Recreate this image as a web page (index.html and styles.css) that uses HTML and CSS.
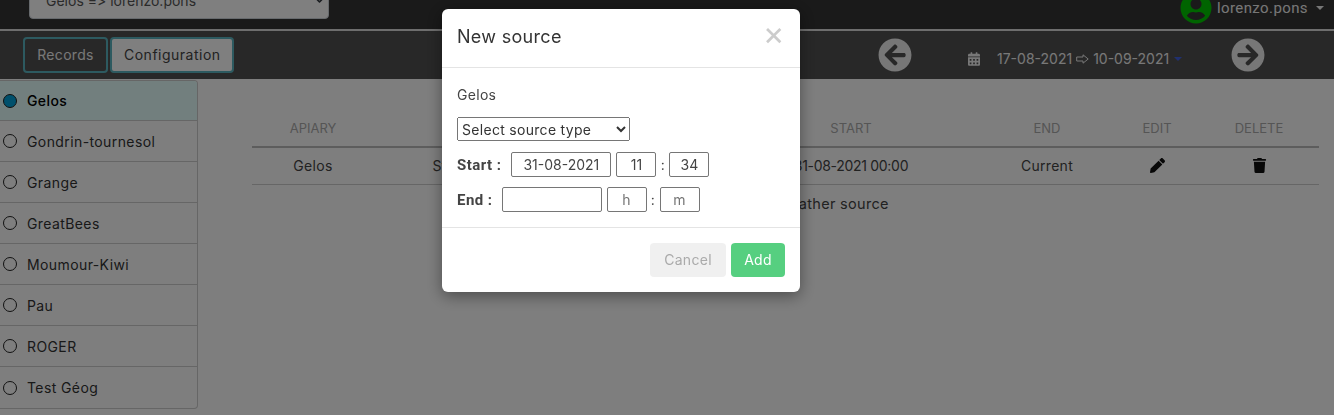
FILE: index.html
```html
<!DOCTYPE html>
<html lang="en">
<head>
    <meta charset="UTF-8">
    <meta name="viewport" content="width=device-width, initial-scale=1.0">
    <title>Weather sources</title>
    <link rel="stylesheet" href="styles.css">
</head>
<body>

<header class="topbar">
    <div class="apiary-picker">
        <select class="apiary-select">
            <option>Gelos => lorenzo.pons</option>
        </select>
        <svg class="picker-chevron" viewBox="0 0 16 16"><path d="M2 5l6 6 6-6" fill="none" stroke="#343a40" stroke-width="2" stroke-linecap="round" stroke-linejoin="round"/></svg>
    </div>
    <div class="user-menu">
        <svg class="user-icon" viewBox="0 0 496 512"><path d="M248 8C111 8 0 119 0 256s111 248 248 248 248-111 248-248S385 8 248 8zm0 96c48.6 0 88 39.4 88 88s-39.4 88-88 88-88-39.4-88-88 39.4-88 88-88zm0 344c-58.7 0-111.3-26.6-146.5-68.2 18.8-35.4 55.6-59.8 98.5-59.8 2.4 0 4.8.4 7.1 1.1 13 4.2 26.6 6.9 40.9 6.9 14.3 0 28-2.7 40.9-6.9 2.3-.7 4.7-1.1 7.1-1.1 42.9 0 79.7 24.4 98.5 59.8C359.3 421.4 306.7 448 248 448z"/></svg>
        <span class="user-name">lorenzo.pons</span>
        <span class="caret"></span>
    </div>
</header>

<nav class="subbar">
    <div class="tabs">
        <button class="tab">Records</button>
        <button class="tab tab-active">Configuration</button>
    </div>
    <div class="date-nav">
        <svg class="round-arrow" viewBox="0 0 512 512"><path d="M256 504C119 504 8 393 8 256S119 8 256 8s248 111 248 248-111 248-248 248zm28.9-143.6L209.4 288H392c13.3 0 24-10.7 24-24v-16c0-13.3-10.7-24-24-24H209.4l75.5-72.4c9.7-9.3 9.9-24.8.4-34.3l-11-10.9c-9.4-9.4-24.6-9.4-33.9 0L107.7 239c-9.4 9.4-9.4 24.6 0 33.9l132.7 132.7c9.4 9.4 24.6 9.4 33.9 0l11-10.9c9.5-9.5 9.3-25-.4-34.3z"/></svg>
        <div class="date-range">
            <svg class="calendar-icon" viewBox="0 0 448 512"><path d="M0 464c0 26.5 21.5 48 48 48h352c26.5 0 48-21.5 48-48V192H0v272zm320-196c0-6.6 5.4-12 12-12h40c6.6 0 12 5.4 12 12v40c0 6.6-5.4 12-12 12h-40c-6.6 0-12-5.4-12-12v-40zm0 128c0-6.6 5.4-12 12-12h40c6.6 0 12 5.4 12 12v40c0 6.6-5.4 12-12 12h-40c-6.6 0-12-5.4-12-12v-40zM192 268c0-6.6 5.4-12 12-12h40c6.6 0 12 5.4 12 12v40c0 6.6-5.4 12-12 12h-40c-6.6 0-12-5.4-12-12v-40zm0 128c0-6.6 5.4-12 12-12h40c6.6 0 12 5.4 12 12v40c0 6.6-5.4 12-12 12h-40c-6.6 0-12-5.4-12-12v-40zM64 268c0-6.6 5.4-12 12-12h40c6.6 0 12 5.4 12 12v40c0 6.6-5.4 12-12 12H76c-6.6 0-12-5.4-12-12v-40zm0 128c0-6.6 5.4-12 12-12h40c6.6 0 12 5.4 12 12v40c0 6.6-5.4 12-12 12H76c-6.6 0-12-5.4-12-12v-40zM400 64h-48V16c0-8.8-7.2-16-16-16h-32c-8.8 0-16 7.2-16 16v48H160V16c0-8.8-7.2-16-16-16h-32c-8.8 0-16 7.2-16 16v48H48C21.5 64 0 85.5 0 112v48h448v-48c0-26.5-21.5-48-48-48z"/></svg>
            <span>17-08-2021</span>
            <svg class="range-arrow" viewBox="0 0 13 10"><path d="M.7 3h6.3V.8L12.2 5 7 9.2V7H.7z" fill="none" stroke="#f0f0f0"/></svg>
            <span>10-09-2021</span>
            <span class="caret caret-blue"></span>
        </div>
        <svg class="round-arrow" viewBox="0 0 512 512"><path d="M256 8c137 0 248 111 248 248S393 504 256 504 8 393 8 256 119 8 256 8zm-28.9 143.6l75.5 72.4H120c-13.3 0-24 10.7-24 24v16c0 13.3 10.7 24 24 24h182.6l-75.5 72.4c-9.7 9.3-9.9 24.8-.4 34.3l11 10.9c9.4 9.4 24.6 9.4 33.9 0L404.3 273c9.4-9.4 9.4-24.6 0-33.9L271.6 106.3c-9.4-9.4-24.6-9.4-33.9 0l-11 10.9c-9.5 9.6-9.3 25.1.4 34.4z"/></svg>
    </div>
</nav>

<div class="content">
    <aside class="sidebar">
        <div class="site site-active"><span class="dot"></span>Gelos</div>
        <div class="site"><span class="dot"></span>Gondrin-tournesol</div>
        <div class="site"><span class="dot"></span>Grange</div>
        <div class="site"><span class="dot"></span>GreatBees</div>
        <div class="site"><span class="dot"></span>Moumour-Kiwi</div>
        <div class="site"><span class="dot"></span>Pau</div>
        <div class="site"><span class="dot"></span>ROGER</div>
        <div class="site"><span class="dot"></span>Test Géog</div>
    </aside>
    <main class="main">
        <table class="sources">
            <colgroup>
                <col class="col-apiary">
                <col class="col-source">
                <col class="col-start">
                <col class="col-end">
                <col class="col-edit">
                <col class="col-delete">
            </colgroup>
            <thead>
                <tr>
                    <th>APIARY</th>
                    <th>SOURCE</th>
                    <th>START</th>
                    <th>END</th>
                    <th>EDIT</th>
                    <th>DELETE</th>
                </tr>
            </thead>
            <tbody>
                <tr>
                    <td>Gelos</td>
                    <td class="cell-source">Station</td>
                    <td class="cell-date">31-08-2021 00:00</td>
                    <td>Current</td>
                    <td><svg class="row-icon" viewBox="0 0 512 512"><path d="M497.9 142.1l-46.1 46.1c-4.7 4.7-12.3 4.7-17 0l-111-111c-4.7-4.7-4.7-12.3 0-17l46.1-46.1c18.7-18.7 49.1-18.7 67.9 0l60.1 60.1c18.8 18.7 18.8 49.1 0 67.9zM284.2 99.8L21.6 362.4.4 483.9c-2.9 16.4 11.4 30.6 27.8 27.8l121.5-21.3 262.6-262.6c4.7-4.7 4.7-12.3 0-17l-111-111c-4.8-4.7-12.4-4.7-17.1 0z"/></svg></td>
                    <td><svg class="row-icon" viewBox="0 0 448 512"><path d="M432 32H312l-9.4-18.7A24 24 0 0 0 281.1 0H166.8a23.72 23.72 0 0 0-21.4 13.3L136 32H16A16 16 0 0 0 0 48v32a16 16 0 0 0 16 16h416a16 16 0 0 0 16-16V48a16 16 0 0 0-16-16zM53.2 467a48 48 0 0 0 47.9 45h245.8a48 48 0 0 0 47.9-45L416 128H32z"/></svg></td>
                </tr>
            </tbody>
        </table>
        <p class="add-source">Please add a weather source</p>
    </main>
</div>

<div class="overlay">
    <div class="modal">
        <div class="modal-header">
            <h5 class="modal-title">New source</h5>
            <span class="modal-close">×</span>
        </div>
        <div class="modal-body">
            <p class="modal-apiary">Gelos</p>
            <select class="source-type">
                <option>Select source type</option>
            </select>
            <div class="time-row">
                <label class="time-label">Start :</label>
                <input class="time-input date-input" type="text" value="31-08-2021">
                <input class="time-input hour-input" type="text" value="11">
                <span class="colon">:</span>
                <input class="time-input hour-input" type="text" value="34">
            </div>
            <div class="time-row time-row-end">
                <label class="time-label">End :</label>
                <input class="time-input date-input" type="text">
                <input class="time-input hour-input" type="text" placeholder="h">
                <span class="colon">:</span>
                <input class="time-input hour-input" type="text" placeholder="m">
            </div>
        </div>
        <div class="modal-footer">
            <button class="btn btn-cancel">Cancel</button>
            <button class="btn btn-add">Add</button>
        </div>
    </div>
</div>

</body>
</html>
```

FILE: styles.css
```css
* {
    box-sizing: border-box;
}
html, body {
    height: 100%;
}
body {
    margin: 0;
    overflow: hidden;
    font-family: Inter, "Noto Sans", sans-serif;
    font-size: 14px;
    letter-spacing: 0.3px;
    color: #444;
    background-color: #fdfdfd;
}

/* top bar, page is scrolled so it is cut at the top */
.topbar {
    height: 31px;
    padding: 0 10px 10px 29px;
    display: flex;
    align-items: flex-end;
    justify-content: space-between;
    overflow: hidden;
    background-color: #343434;
    border-bottom: 2px solid #ddd;
}
.apiary-picker {
    position: relative;
    flex: none;
    width: 300px;
    height: 38px;
}
.apiary-select {
    appearance: none;
    width: 100%;
    height: 100%;
    padding: 0 16px;
    font: inherit;
    font-feature-settings: "calt" 0;
    letter-spacing: 0;
    color: #555;
    background: #fff;
    border: 1px solid #ced4da;
    border-radius: 4px;
}
.picker-chevron {
    position: absolute;
    right: 3px;
    top: 12px;
    width: 13px;
    height: 13px;
}
.user-menu {
    display: flex;
    align-items: center;
    flex: none;
    height: 32px;
    margin-bottom: -5px;
    color: #eee;
}
.user-icon {
    width: 32px;
    height: 32px;
    fill: #00c800;
}
.user-name {
    margin-left: 5px;
    font-family: Roboto, sans-serif;
    font-size: 15px;
    letter-spacing: 0.4px;
}
.caret {
    display: inline-block;
    margin-left: 8px;
    border-top: 4px solid #eee;
    border-left: 4px solid transparent;
    border-right: 4px solid transparent;
}
.caret-blue {
    margin-left: 5px;
    border-top-color: #4060e0;
}

.subbar {
    height: 48px;
    padding: 6px 69px 6px 23px;
    display: flex;
    justify-content: space-between;
    background-color: #505050;
}
.tabs {
    display: flex;
    gap: 2px;
}
.tab {
    height: 36px;
    padding: 0 12px 2px;
    font: inherit;
    letter-spacing: inherit;
    color: #f0f0f0;
    background-color: transparent;
    border: 2px solid #5bb5c0;
    border-radius: 4px;
}
.tab:first-child {
    width: 85px;
}
.tab-active {
    width: 124px;
    letter-spacing: 0.5px;
    color: #444;
    background-color: #fff;
}
.date-nav {
    display: flex;
    align-items: center;
}
.round-arrow {
    width: 34px;
    height: 34px;
    fill: #eee;
}
.date-range {
    width: 319px;
    padding-left: 56px;
    padding-top: 7px;
    display: flex;
    align-items: center;
    letter-spacing: 0;
    color: #f0f0f0;
}
.range-arrow {
    width: 13px;
    height: 10px;
    margin: 0 4px;
}
.calendar-icon {
    width: 12px;
    height: 14px;
    margin-right: 17px;
    fill: #f0f0f0;
}

.content {
    display: flex;
    align-items: flex-start;
}
.sidebar {
    flex: none;
    width: 198px;
    margin-top: 1px;
    border: 1px solid #ccc;
    border-left: none;
    border-radius: 0 4px 4px 0;
    overflow: hidden;
}
.site {
    height: 41px;
    display: flex;
    align-items: center;
    padding-left: 3px;
    letter-spacing: 0.4px;
    color: #333;
    border-bottom: 1px solid #ccc;
}
.site:last-child {
    border-bottom: none;
}
.site-active {
    height: 40px;
    color: #000;
    font-weight: 500;
    background-color: #e4fffd;
}
.dot {
    flex: none;
    width: 14px;
    height: 14px;
    margin-right: 10px;
    border: 1.5px solid #222;
    border-radius: 50%;
}
.site-active .dot {
    background-color: #00a0d8;
}

.main {
    flex: 1;
    padding: 34px 15px 0 54px;
}
.sources {
    width: 100%;
    table-layout: fixed;
    border-collapse: collapse;
    text-align: center;
}
.col-apiary {
    width: 122px;
}
.col-start {
    width: 256px;
}
.col-end {
    width: 136px;
}
.col-edit {
    width: 84px;
}
.col-delete {
    width: 120px;
}
.sources th {
    height: 34px;
    padding: 0 0 4px;
    font-size: 13px;
    font-weight: 400;
    letter-spacing: 0;
    color: #aaa;
    border-bottom: 2px solid #bbb;
}
.sources td {
    height: 37px;
    padding: 0;
    border-bottom: 1px solid #ccc;
}
.sources .cell-source {
    padding-right: 184px;
}
.cell-date {
    letter-spacing: -0.3px;
}
.row-icon {
    display: block;
    margin: 0 auto;
    width: 15px;
    height: 15px;
    fill: #111;
}
.add-source {
    margin: 10px 0 0;
    font-size: 14.5px;
    text-align: center;
}

.overlay {
    position: fixed;
    inset: 0;
    background-color: rgba(0, 0, 0, 0.5);
}
.modal {
    position: absolute;
    left: 442px;
    top: 9px;
    width: 358px;
    background-color: #fff;
    border-radius: 6px;
    box-shadow: 0 4px 16px rgba(0, 0, 0, 0.4);
}
.modal-header {
    height: 59px;
    padding: 0 15px 4px;
    display: flex;
    align-items: center;
    justify-content: space-between;
    border-bottom: 1px solid #e4e4e4;
}
.modal-title {
    margin: 0;
    font-size: 18px;
    font-weight: 400;
    color: #333;
}
.modal-close {
    margin-top: -6px;
    font-size: 33px;
    font-weight: 400;
    line-height: 1;
    color: #ccc;
}
.modal-body {
    height: 159px;
    padding: 17px 15px 0;
}
.modal-apiary {
    margin: 0 0 13px;
    line-height: 19px;
}
.source-type {
    display: block;
    width: 173px;
    height: 24px;
    margin-bottom: 11px;
    font: inherit;
    letter-spacing: inherit;
    color: #333;
}
.time-row {
    display: flex;
    align-items: center;
    height: 25px;
    margin-bottom: 10px;
}
.time-label {
    margin-right: 10px;
    font-family: Roboto, sans-serif;
    font-size: 15px;
    font-weight: 700;
    letter-spacing: 0.45px;
}
.time-row-end .time-label {
    margin-right: 9px;
}
.time-input {
    height: 25px;
    padding: 0;
    font: inherit;
    letter-spacing: 0;
    text-align: center;
    color: #444;
    border: 1px solid #767676;
    border-radius: 2px;
}
.date-input {
    width: 100px;
    margin-right: 5px;
}
.hour-input {
    width: 40px;
}
.colon {
    width: 13px;
    text-align: center;
}
.modal-footer {
    height: 65px;
    padding: 15px 15px 0 0;
    display: flex;
    justify-content: flex-end;
    gap: 5px;
    border-top: 1px solid #e4e4e4;
}
.btn {
    height: 34px;
    padding: 0 0 2px;
    font: inherit;
    letter-spacing: inherit;
    border: none;
    border-radius: 4px;
}
.btn-cancel {
    width: 76px;
    color: #aaa;
    background-color: #f0f0f0;
}
.btn-add {
    width: 54px;
    color: #fff;
    background-color: #56cf80;
}
```
